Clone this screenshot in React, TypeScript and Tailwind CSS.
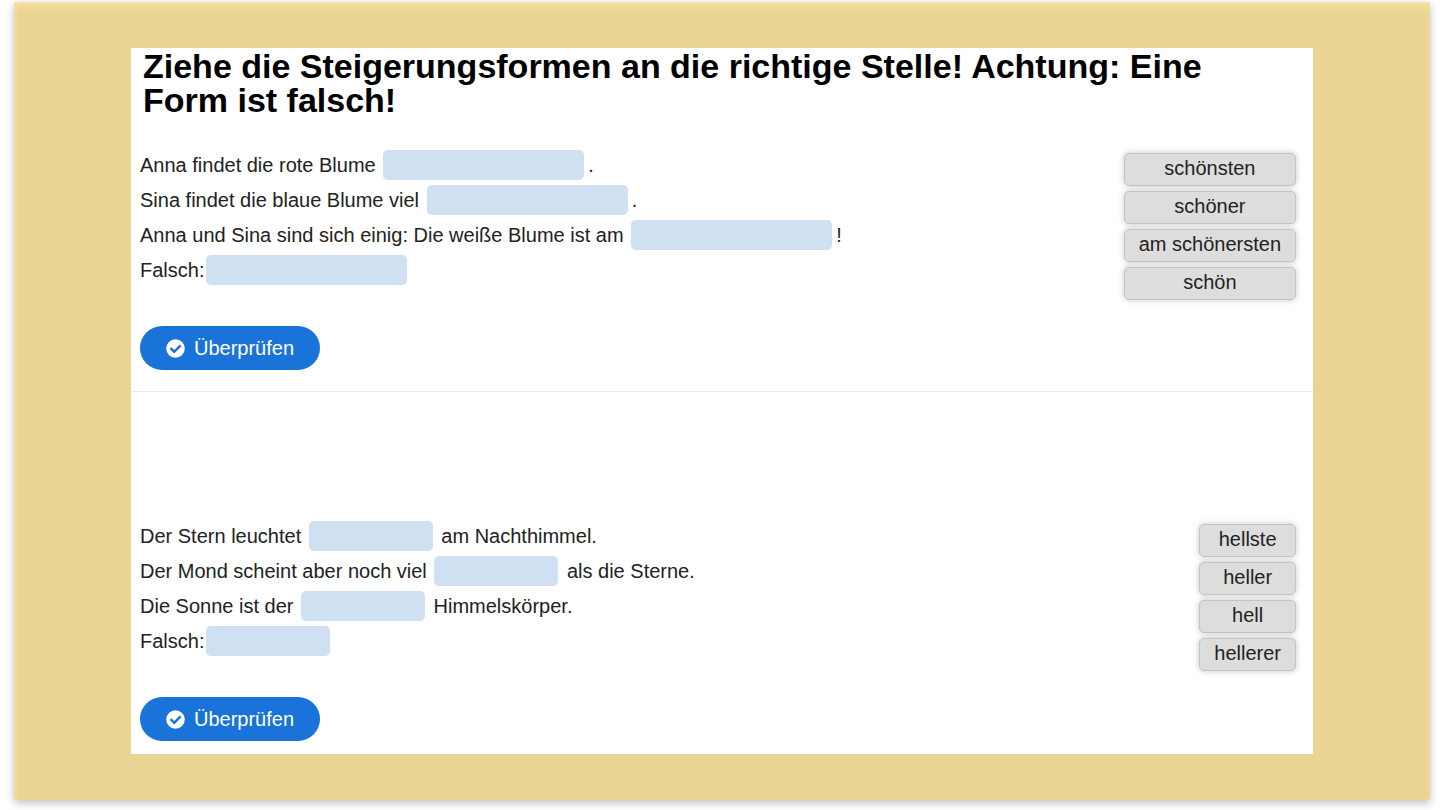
import { useState } from "react";

type Line = { before: string; after: string };

type ExerciseProps = {
  label: string;
  lines: Line[];
  words: string[];
  gapClass: string;
};

function CheckIcon() {
  return (
    <svg viewBox="0 0 19 19" className="size-[19px] shrink-0" aria-hidden="true">
      <circle cx="9.5" cy="9.5" r="9.3" fill="#fff" />
      <path d="M4.6 9.2l3.6 3.6 6.4-6.4" fill="none" stroke="#1a73d9" strokeWidth="2.5" />
    </svg>
  );
}

function Exercise({ label, lines, words, gapClass }: ExerciseProps) {
  const [filled, setFilled] = useState<Record<number, string>>({});
  const used = Object.values(filled);

  return (
    <section aria-label={label} className="pl-[9px] pr-[17px]">
      <div className="flex items-start justify-between">
        <div className="flex flex-col gap-[5px]">
          {lines.map((line, i) => (
            <p key={i} className="flex h-[30px] items-center whitespace-pre">
              <span>{line.before}</span>
              <button
                type="button"
                aria-label={`Lücke ${i + 1}`}
                className={gapClass}
                onDragOver={(e) => e.preventDefault()}
                onDrop={(e) => {
                  e.preventDefault();
                  setFilled({ ...filled, [i]: e.dataTransfer.getData("text/plain") });
                }}
              >
                {filled[i]}
              </button>
              <span>{line.after}</span>
            </p>
          ))}
        </div>
        <div className="flex flex-col gap-[5px] pt-[3px]">
          {words
            .filter((w) => !used.includes(w))
            .map((word) => (
              <button
                key={word}
                type="button"
                draggable
                onDragStart={(e) => e.dataTransfer.setData("text/plain", word)}
                className="h-[33px] cursor-grab rounded-[5px] border border-[#c4c4c4] bg-[#dddddd] px-3.5 pb-[3px] text-center leading-[28px] shadow-[0_0_6px_rgba(0,0,0,0.22)]"
              >
                {word}
              </button>
            ))}
        </div>
      </div>
      <button
        type="button"
        className="mt-[26px] flex h-11 w-[180px] items-center justify-center gap-[9px] rounded-full bg-[#1a73d9] text-white"
      >
        <CheckIcon />
        Überprüfen
      </button>
    </section>
  );
}

export default function App() {
  return (
    <main className="min-h-screen bg-white pt-0.5 pr-2.5 pb-2.5 pl-3.5 font-['Liberation_Sans',Arial,sans-serif] text-[20px] text-[#222222]">
      <div className="bg-[#ead493] px-[117px] py-[46px] shadow-[0_3px_8px_rgba(0,0,0,0.25),inset_0_5px_8px_-2px_#fde6a4,inset_3px_0_5px_-1px_#f3dc9b]">
        <div className="bg-white">
          <h1 className="mb-[33px] pt-px pr-10 pl-3 text-[34px] leading-[34px] font-bold text-black">
            Ziehe die Steigerungsformen an die richtige Stelle! Achtung: Eine Form ist falsch!
          </h1>
          <Exercise
            label="Schön steigern"
            gapClass="mr-1 ml-0.5 h-[30px] w-[201px] rounded-[5px] bg-[#cee0f1]"
            lines={[
              { before: "Anna findet die rote Blume ", after: "." },
              { before: "Sina findet die blaue Blume viel ", after: "." },
              { before: "Anna und Sina sind sich einig: Die weiße Blume ist am ", after: "!" },
              { before: "Falsch:", after: "" },
            ]}
            words={["schönsten", "schöner", "am schönersten", "schön"]}
          />
          <hr className="mt-[21px] mb-[129px] border-t border-[#ececec]" />
          <Exercise
            label="Hell steigern"
            gapClass="mr-[3px] ml-0.5 h-[30px] w-[124px] rounded-[5px] bg-[#cee0f1]"
            lines={[
              { before: "Der Stern leuchtet ", after: " am Nachthimmel." },
              { before: "Der Mond scheint aber noch viel ", after: " als die Sterne." },
              { before: "Die Sonne ist der ", after: " Himmelskörper." },
              { before: "Falsch:", after: "" },
            ]}
            words={["hellste", "heller", "hell", "hellerer"]}
          />
          <div className="h-[13px]" />
        </div>
      </div>
    </main>
  );
}
